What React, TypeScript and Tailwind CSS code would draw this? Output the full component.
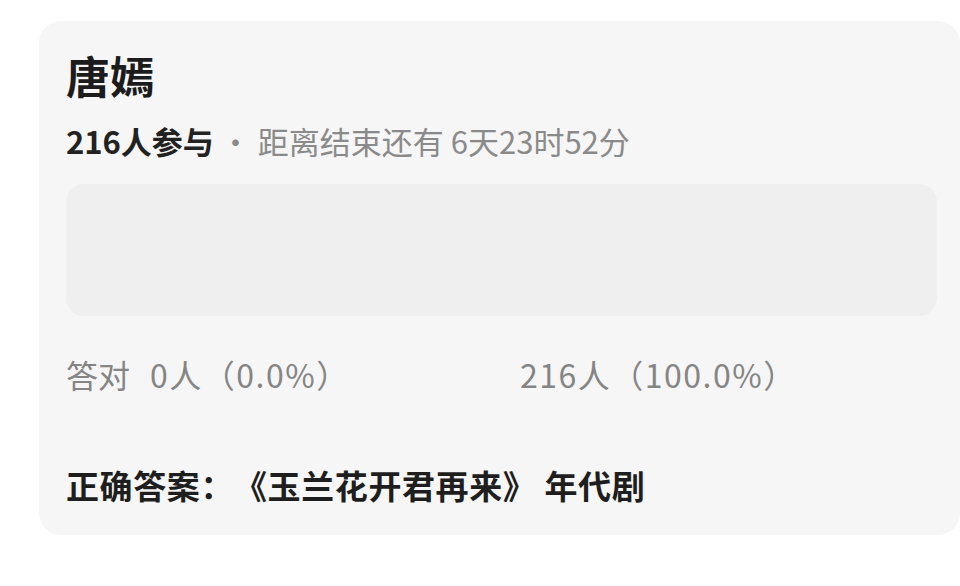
const font = { fontFamily: '"Noto Sans CJK SC", "Noto Sans", sans-serif' }

export default function App() {
  const stats = [
    { label: '答对', value: '0人（0.0%）', width: 'w-[454px]' },
    { label: '', value: '216人（100.0%）', width: '' },
  ]

  return (
    <div className="w-[960px] h-[586px] bg-white overflow-hidden [text-spacing-trim:space-all]" style={font}>
      <div className="mt-[21px] ml-[39px] w-[921px] rounded-[22px] bg-[#f6f6f6] pl-[27px] pr-[23px] pt-[32px] pb-[33px]">
        <h1 className="text-[44px] leading-[44px] font-bold text-[#1c1c1c]">唐嫣</h1>

        <div className="mt-[28px] flex items-center text-[31px] leading-[32px]">
          <span className="font-bold text-[#222]">216人参与</span>
          <span className="ml-[6px] text-[#8a8a8a]">· 距离结束还有 6天23时52分</span>
        </div>

        {/* empty option bar */}
        <div className="mt-[27px] h-[132px] rounded-[18px] bg-[#efefef]" />

        <div className="mt-[42px] flex text-[32px] leading-[32px] text-[#858585]">
          {stats.map((s, i) => (
            <div key={i} className={`flex items-center gap-[20px] ${s.width}`}>
              {s.label && <span>{s.label}</span>}
              <span className="tracking-[1.5px]">{s.value}</span>
            </div>
          ))}
        </div>

        <div className="mt-[79px] text-[33px] leading-[33px] font-bold text-[#1e1e1e] tracking-[0.6px]">
          正确答案：《玉兰花开君再来》 年代剧
        </div>
      </div>
    </div>
  )
}
